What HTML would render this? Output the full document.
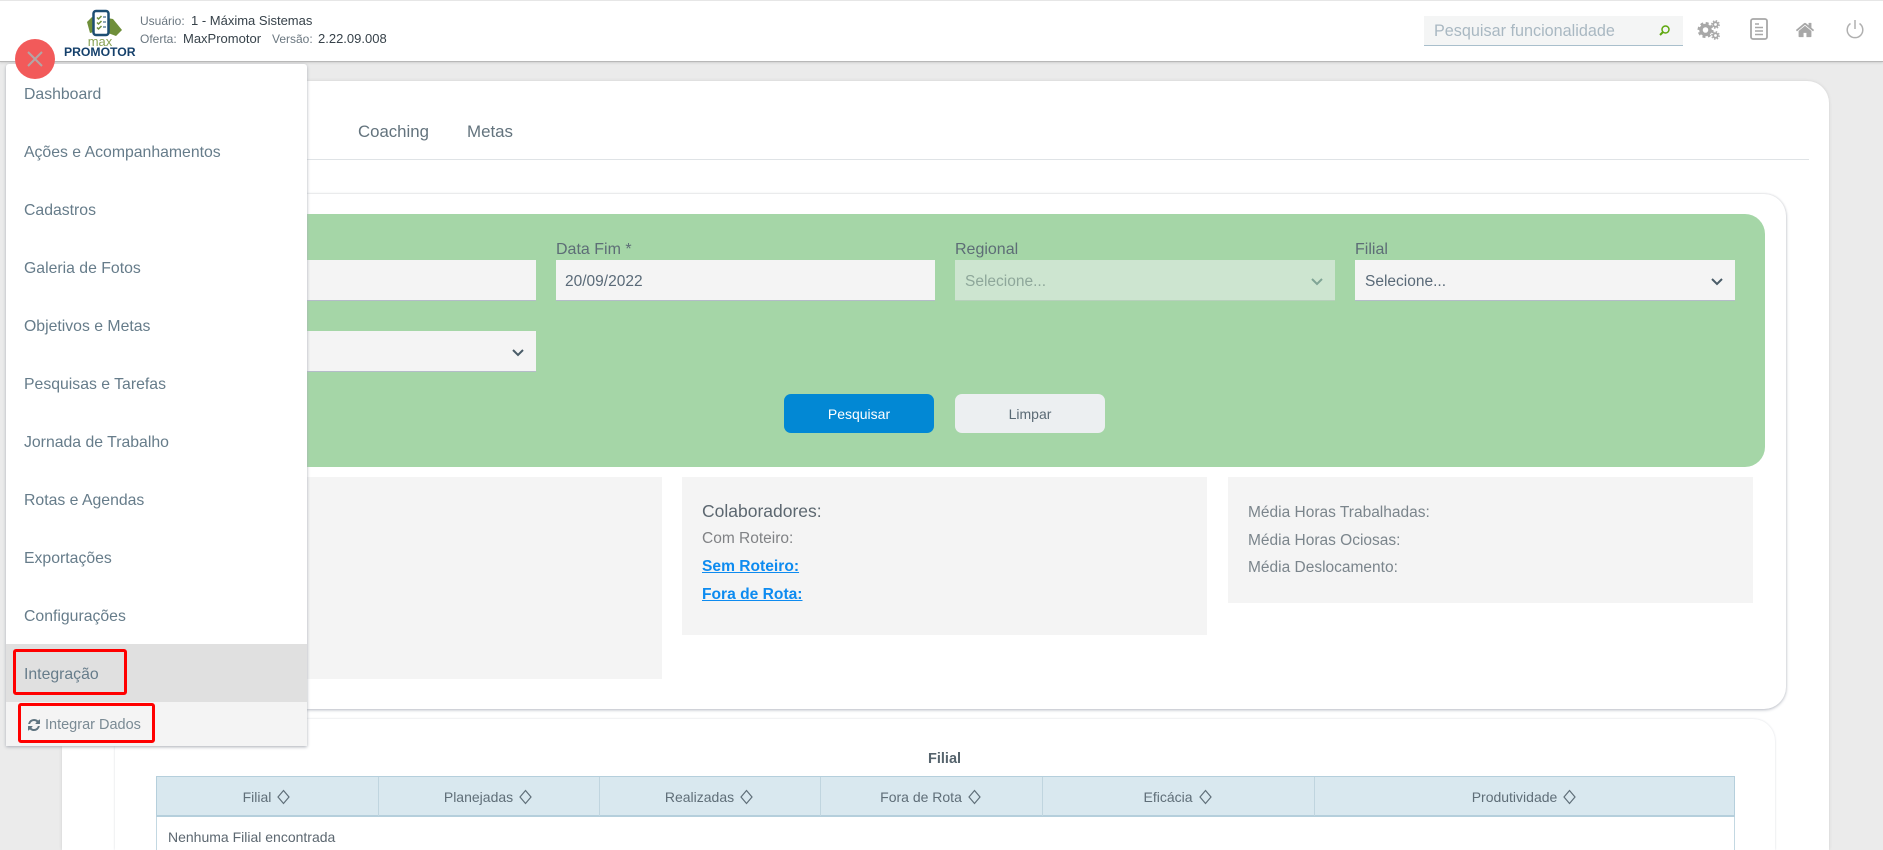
<!DOCTYPE html>
<html lang="pt-BR"><head><meta charset="utf-8"><title>MaxPromotor</title>
<style>
html,body{margin:0;padding:0;width:1883px;height:850px;overflow:hidden;background:#ebebeb;font-family:"Liberation Sans",sans-serif;color:#5c6b75}
#root{position:relative;width:1883px;height:850px;overflow:hidden;background:#ebebeb}
.a{position:absolute}
.t{position:absolute;white-space:nowrap;line-height:20px}
.inp{position:absolute;background:#f4f4f4;height:40px;border-bottom:1px solid #b4bcc8;box-sizing:content-box}
.lb{position:absolute;white-space:nowrap;font-size:16px;line-height:20px;color:#5d6d76;top:240px}
.val{position:absolute;white-space:nowrap;font-size:15.5px;line-height:20px;color:#5a6a78;top:272px}
.mi{position:absolute;left:24px;font-size:15.8px;line-height:20px;color:#667c8a;white-space:nowrap}
.th{position:absolute;top:776px;height:40px;line-height:42px;text-align:center;font-size:14px;color:#5f6e78;white-space:nowrap;box-sizing:border-box}
.th svg{vertical-align:-3px;margin-left:5px}
.p3{position:absolute;left:1248px;font-size:15.5px;line-height:20px;color:#7b858c;white-space:nowrap}
.v{color:#37424a;font-size:13px}
</style></head>
<body>
<div id="root">

<!-- main card -->
<div class="a" style="left:62px;top:81px;width:1767px;height:769px;background:#fff;border-radius:22px 22px 0 0;box-shadow:0 0 3px #cfcfcf"></div>
<div class="t" style="left:278px;top:122px;font-size:16.8px;color:#63737d">to</div>
<div class="t" style="left:358px;top:122px;font-size:16.8px;color:#63737d">Coaching</div>
<div class="t" style="left:467px;top:122px;font-size:16.9px;color:#63737d">Metas</div>
<div class="a" style="left:80px;top:159px;width:1729px;height:1px;background:#dfe3e6"></div>

<!-- filter card -->
<div class="a" style="left:83px;top:194px;width:1703px;height:515px;background:#fff;border-radius:22px;box-shadow:0 1px 3px #b9bdc6,0 0 2px #e2e2e2"></div>
<div class="a" style="left:100px;top:214px;width:1665px;height:253px;background:#a5d6a7;border-radius:20px"></div>

<div class="inp" style="left:157px;top:260px;width:379px"></div>
<div class="lb" style="left:556px">Data Fim *</div>
<div class="inp" style="left:556px;top:260px;width:379px"></div>
<div class="val" style="left:565px">20/09/2022</div>
<div class="lb" style="left:955px">Regional</div>
<div class="inp" style="left:955px;top:260px;width:380px;background:#cde5d0;border-bottom-color:#b6d0bb"></div>
<div class="val" style="left:965px;color:#8ea79a">Selecione...</div>
<svg class="a" style="left:1310px;top:277px" width="14" height="10" viewBox="0 0 14 10"><path d="M2 2l5 5 5-5" fill="none" stroke="#80a596" stroke-width="2"/></svg>
<div class="lb" style="left:1355px">Filial</div>
<div class="inp" style="left:1355px;top:260px;width:380px"></div>
<div class="val" style="left:1365px">Selecione...</div>
<svg class="a" style="left:1710px;top:277px" width="14" height="10" viewBox="0 0 14 10"><path d="M2 2l5 5 5-5" fill="none" stroke="#4a5c68" stroke-width="2"/></svg>
<div class="inp" style="left:157px;top:331px;width:379px"></div>
<svg class="a" style="left:511px;top:348px" width="14" height="10" viewBox="0 0 14 10"><path d="M2 2l5 5 5-5" fill="none" stroke="#4a5c68" stroke-width="2"/></svg>

<div class="a" style="left:784px;top:394px;width:150px;height:39px;border-radius:7px;background:#0288d4;color:#fff;font-size:14px;line-height:40px;text-align:center">Pesquisar</div>
<div class="a" style="left:955px;top:394px;width:150px;height:39px;border-radius:7px;background:#eceff1;color:#5a6a75;font-size:14px;line-height:40px;text-align:center">Limpar</div>

<!-- panels -->
<div class="a" style="left:120px;top:477px;width:542px;height:202px;background:#f4f4f4"></div>
<div class="a" style="left:682px;top:477px;width:525px;height:158px;background:#f4f4f4"></div>
<div class="a" style="left:1228px;top:477px;width:525px;height:126px;background:#f4f4f4"></div>
<div class="t" style="left:702px;top:501px;font-size:17.5px;color:#5c6770">Colaboradores:</div>
<div class="t" style="left:702px;top:529px;font-size:15.5px;color:#808285">Com Roteiro:</div>
<div class="t" style="left:702px;top:557px;font-size:15.6px;font-weight:bold;color:#0d8bf0;text-decoration:underline">Sem Roteiro:</div>
<div class="t" style="left:702px;top:585px;font-size:15.6px;font-weight:bold;color:#0d8bf0;text-decoration:underline">Fora de Rota:</div>
<div class="p3" style="top:503px">Média Horas Trabalhadas:</div>
<div class="p3" style="top:531px">Média Horas Ociosas:</div>
<div class="p3" style="top:558px">Média Deslocamento:</div>

<!-- table card -->
<div class="a" style="left:115px;top:719px;width:1660px;height:131px;background:#fff;border-radius:22px 22px 0 0;box-shadow:0 0 2px #d8dbe0"></div>
<div class="t" style="left:928px;top:749px;font-size:14.5px;font-weight:bold;color:#56646d">Filial</div>
<div class="a" style="left:156px;top:776px;width:1579px;height:74px;box-sizing:border-box;border:1px solid #c3d8e2;border-bottom:0;background:#fff"></div>
<div class="a" style="left:156px;top:776px;width:1579px;height:41px;box-sizing:border-box;background:#d9e8ef;border:1px solid #b5cfdc;border-bottom-width:2px"></div>
<div class="th" style="left:156px;width:222px">Filial<svg width="15" height="16" viewBox="0 0 15 16"><path d="M7.500 1.500L13 8 7.500 14.500 2 8z" fill="none" stroke="#5f6e78" stroke-width="1.200"/></svg></div>
<div class="th" style="left:378px;width:221px">Planejadas<svg width="15" height="16" viewBox="0 0 15 16"><path d="M7.500 1.500L13 8 7.500 14.500 2 8z" fill="none" stroke="#5f6e78" stroke-width="1.200"/></svg></div>
<div class="th" style="left:599px;width:221px">Realizadas<svg width="15" height="16" viewBox="0 0 15 16"><path d="M7.500 1.500L13 8 7.500 14.500 2 8z" fill="none" stroke="#5f6e78" stroke-width="1.200"/></svg></div>
<div class="th" style="left:820px;width:222px">Fora de Rota<svg width="15" height="16" viewBox="0 0 15 16"><path d="M7.500 1.500L13 8 7.500 14.500 2 8z" fill="none" stroke="#5f6e78" stroke-width="1.200"/></svg></div>
<div class="th" style="left:1042px;width:272px">Eficácia<svg width="15" height="16" viewBox="0 0 15 16"><path d="M7.500 1.500L13 8 7.500 14.500 2 8z" fill="none" stroke="#5f6e78" stroke-width="1.200"/></svg></div>
<div class="th" style="left:1314px;width:421px">Produtividade<svg width="15" height="16" viewBox="0 0 15 16"><path d="M7.500 1.500L13 8 7.500 14.500 2 8z" fill="none" stroke="#5f6e78" stroke-width="1.200"/></svg></div>
<div class="a" style="left:378px;top:777px;width:1px;height:39px;background:#c0d5df"></div>
<div class="a" style="left:599px;top:777px;width:1px;height:39px;background:#c0d5df"></div>
<div class="a" style="left:820px;top:777px;width:1px;height:39px;background:#c0d5df"></div>
<div class="a" style="left:1042px;top:777px;width:1px;height:39px;background:#c0d5df"></div>
<div class="a" style="left:1314px;top:777px;width:1px;height:39px;background:#c0d5df"></div>
<div class="t" style="left:168px;top:827px;font-size:14px;color:#5c6770">Nenhuma Filial encontrada</div>

<!-- header -->
<div class="a" style="left:0;top:0;width:1883px;height:62px;background:#fff;border-top:1px solid #e6e6e6;box-sizing:border-box;border-bottom:1px solid #b8b8b8;box-shadow:0 1px 2px #cfcfcf"></div>
<svg class="a" style="left:84px;top:8px" width="40" height="30" viewBox="0 0 40 30">
<path d="M3 14l5-5 2 1v14l-4 1z" fill="#6f8f3a"/>
<path d="M23 10l6 1 9 11-6 6-8-3-5-2-3-4 3-1z" fill="#6f8f3a"/>
<rect x="9.500" y="3" width="15" height="24" rx="2.500" fill="#fff" stroke="#1d4e73" stroke-width="2.500"/>
<path d="M13 9.500l1.500 1.500 3-3M13 14.500l1.500 1.500 3-3M13 19.500l1.500 1.500 3-3" fill="none" stroke="#6f8f3a" stroke-width="1.500"/>
<path d="M19 9h3M19 14h3M19 19h3" stroke="#1d4e73" stroke-width="1"/>
</svg>
<div class="t" style="left:64px;width:72px;text-align:center;top:32px;font-size:13px;color:#8aa356">max</div>
<div class="t" style="left:64px;top:42px;font-size:12.2px;font-weight:bold;color:#15406b">PROMOTOR</div>
<div class="t" style="left:140px;top:11px;font-size:12px;color:#6b7780">Usuário:</div>
<div class="t" style="left:191px;top:11px" ><span class="v">1 - Máxima Sistemas</span></div>
<div class="t" style="left:140px;top:29px;font-size:12px;color:#6b7780">Oferta:</div>
<div class="t" style="left:183px;top:29px"><span class="v">MaxPromotor</span></div>
<div class="t" style="left:272px;top:29px;font-size:12px;color:#6b7780">Versão:</div>
<div class="t" style="left:318px;top:29px"><span class="v">2.22.09.008</span></div>

<div class="a" style="left:1424px;top:16px;width:259px;height:29px;background:#f4f5f5;border-bottom:1px solid #a9bfcc"></div>
<div class="t" style="left:1434px;top:21px;font-size:16.2px;color:#a9b8c2">Pesquisar funcionalidade</div>
<svg class="a" style="left:1658px;top:24px" width="13" height="13" viewBox="0 0 13 13"><circle cx="7.500" cy="5.500" r="3.500" fill="none" stroke="#5fa80f" stroke-width="1.500"/><path d="M5 8l-3 3" stroke="#5fa80f" stroke-width="2"/></svg>

<svg class="a" style="left:1697px;top:18px" width="24" height="24" viewBox="0 0 24 24">
<circle cx="8.500" cy="12" r="4.500" fill="none" stroke="#a8a8a8" stroke-width="3.500"/><circle cx="8.500" cy="12" r="7" fill="none" stroke="#a8a8a8" stroke-width="2" stroke-dasharray="3 2.500"/>
<circle cx="18.500" cy="6.500" r="2.300" fill="none" stroke="#a8a8a8" stroke-width="1.800"/><circle cx="18.500" cy="6.500" r="3.800" fill="none" stroke="#a8a8a8" stroke-width="1.200" stroke-dasharray="1.500 1.500"/>
<circle cx="18.500" cy="17.500" r="2.300" fill="none" stroke="#a8a8a8" stroke-width="1.800"/><circle cx="18.500" cy="17.500" r="3.800" fill="none" stroke="#a8a8a8" stroke-width="1.200" stroke-dasharray="1.500 1.500"/>
</svg>
<svg class="a" style="left:1750px;top:18px" width="18" height="22" viewBox="0 0 18 22"><rect x="1" y="1" width="16" height="20" rx="2" fill="none" stroke="#a8a8a8" stroke-width="1.800"/><path d="M5 6h4M5 9.500h8M5 13h8M5 16.500h8" stroke="#a8a8a8" stroke-width="1.500"/></svg>
<svg class="a" style="left:1795px;top:20px" width="20" height="20" viewBox="0 0 1792 1792"><path fill="#a8a8a8" d="M1472 992v480q0 26-19 45t-45 19h-384v-384h-256v384h-384q-26 0-45-19t-19-45v-480q0-1 .5-3t.5-3l575-474 575 474q1 2 1 6zm223-69l-62 74q-8 9-21 11h-3q-13 0-21-7l-692-577-692 577q-12 8-24 7-13-2-21-11l-62-74q-8-10-7-23.5t11-21.5l719-599q32-26 76-26t76 26l244 204v-195q0-14 9-23t23-9h192q14 0 23 9t9 23v408l219 182q10 8 11 21.5t-7 23.5z"/></svg>
<svg class="a" style="left:1845px;top:19px" width="20" height="20" viewBox="0 0 20 20"><path d="M5.500 4.500a7.800 7.800 0 1 0 9 0" fill="none" stroke="#b0b0b0" stroke-width="1.500"/><path d="M10 1v9" stroke="#b0b0b0" stroke-width="1.500"/></svg>

<!-- side menu -->
<div class="a" style="left:6px;top:64px;width:301px;height:682px;background:#fff;border-radius:3px 3px 0 0;box-shadow:0 1px 3px #a9adb5"></div>
<div class="a" style="left:6px;top:644px;width:301px;height:58px;background:#e0e0e0"></div>
<div class="a" style="left:6px;top:702px;width:301px;height:44px;background:#f4f4f4"></div>
<div class="mi" style="top:85px">Dashboard</div>
<div class="mi" style="top:143px">Ações e Acompanhamentos</div>
<div class="mi" style="top:201px">Cadastros</div>
<div class="mi" style="top:259px">Galeria de Fotos</div>
<div class="mi" style="top:317px">Objetivos e Metas</div>
<div class="mi" style="top:375px">Pesquisas e Tarefas</div>
<div class="mi" style="top:433px">Jornada de Trabalho</div>
<div class="mi" style="top:491px">Rotas e Agendas</div>
<div class="mi" style="top:549px">Exportações</div>
<div class="mi" style="top:607px">Configurações</div>
<div class="mi" style="top:665px">Integração</div>
<svg class="a" style="left:27px;top:718px" width="14" height="14" viewBox="0 0 1792 1792"><path fill="#5f7480" d="M1639 1056q0 5-1 7-64 268-268 434.500t-478 166.500q-146 0-282.500-55t-243.500-157l-129 129q-19 19-45 19t-45-19-19-45v-448q0-26 19-45t45-19h448q26 0 45 19t19 45-19 45l-137 137q71 66 161 102t187 36q134 0 250-65t186-179q11-17 53-117 8-23 30-23h192q13 0 22.500 9.500t9.500 22.500zm25-800v448q0 26-19 45t-45 19h-448q-26 0-45-19t-19-45 19-45l138-138q-148-137-349-137-134 0-250 65t-186 179q-11 17-53 117-8 23-30 23h-199q-13 0-22.500-9.500t-9.500-22.500v-7q65-268 270-434.500t480-166.500q146 0 284 55.500t245 156.500l130-129q19-19 45-19t45 19 19 45z"/></svg>
<div class="t" style="left:45px;top:715px;font-size:14.5px;color:#7a8a94">Integrar Dados</div>
<div class="a" style="left:13px;top:649px;width:114px;height:46px;box-sizing:border-box;border:3.500px solid #f00;border-radius:3px"></div>
<div class="a" style="left:18px;top:703px;width:137px;height:40px;box-sizing:border-box;border:3.500px solid #f00;border-radius:3px"></div>

<div class="a" style="left:15px;top:39px;width:40px;height:40px;border-radius:50%;background:#f25a5a"></div>
<svg class="a" style="left:15px;top:39px" width="40" height="40" viewBox="0 0 40 40"><path d="M13 13l14 14M27 13L13 27" stroke="#b3a5a5" stroke-width="2"/></svg>
</div>
</body></html>
